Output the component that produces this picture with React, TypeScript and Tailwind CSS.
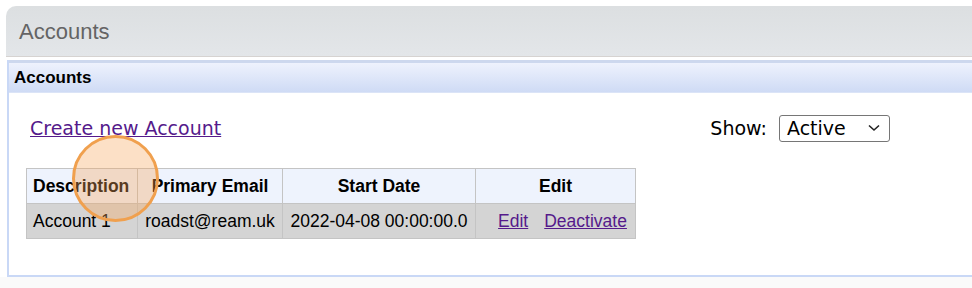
import React from "react";

const cols = [
  { label: "Description", w: "w-[111px]", align: "text-left" },
  { label: "Primary Email", w: "w-[145px]", align: "text-center" },
  { label: "Start Date", w: "w-[193px]", align: "text-center" },
  { label: "Edit", w: "w-[160px]", align: "text-center" },
];

const App = () => {
  return (
    <div className="w-[972px] h-[288px] bg-white relative overflow-hidden font-['Liberation_Sans',Arial,sans-serif]">
      {/* page header */}
      <div className="ml-[6px] mt-[6px] h-[51px] rounded-tl-[10px] bg-gradient-to-b from-[#dcdfe1] to-[#e3e6e9] border-b border-[#d6d3d1] flex items-center pl-[13px]">
        <span className="text-[22px] text-[#646464]">Accounts</span>
      </div>

      {/* panel */}
      <div className="ml-[7px] mt-[3px] h-[217px] border-l-2 border-b-2 border-[#c9d8f6] flex flex-col">
        <div className="h-[33px] border-t-[3px] border-[#cdd8ee] bg-gradient-to-b from-[#eef2fd] to-[#cfdbf5] border-b border-b-[#dbe4f7] flex items-center pl-[5px]">
          <span className="text-[17px] font-bold text-black">Accounts</span>
        </div>

        <div className="flex items-center justify-between pl-[21px] pr-[82px] mt-[20px]">
          <a
            href="#"
            className="text-[19px] text-[#551a8b] underline font-['DejaVu_Sans',Verdana,sans-serif] leading-[30px]"
          >
            Create new Account
          </a>
          <div className="flex items-center gap-[12px] font-['DejaVu_Sans',Verdana,sans-serif]">
            <span className="text-[19px] text-black">Show:</span>
            <div className="w-[111px] h-[27px] border border-[#767676] rounded-[3px] flex items-center justify-between pl-[7px] pr-[9px]">
              <span className="text-[19px] text-black">Active</span>
              <svg width="12" height="8" viewBox="0 0 12 8" fill="none" stroke="#222" strokeWidth="1.6">
                <path d="M1 1.5 L6 6 L11 1.5" />
              </svg>
            </div>
          </div>
        </div>

        <table className="ml-[17px] mt-[25px] table-fixed border-collapse border border-[#c4c4c4] text-[17.5px] text-black w-[610px]">
          <thead>
            <tr className="bg-[#eef3fd] h-[35px]">
              {cols.map((c) => (
                <th
                  key={c.label}
                  className={`border border-[#c4c4c4] font-bold px-[6px] ${c.w} ${c.align}`}
                >
                  {c.label}
                </th>
              ))}
            </tr>
          </thead>
          <tbody>
            <tr className="bg-[#d4d4d4] h-[35px]">
              <td className="border border-[#c4c4c4] px-[6px] whitespace-nowrap">Account 1</td>
              <td className="border border-[#c4c4c4] px-[5px] text-center whitespace-nowrap">roadst@ream.uk</td>
              <td className="border border-[#c4c4c4] px-[5px] text-center whitespace-nowrap">2022-04-08 00:00:00.0</td>
              <td className="border border-[#c4c4c4] pl-[19px] pr-[5px] text-center whitespace-nowrap">
                <a href="#" className="text-[#551a8b] underline mr-[16px]">Edit</a>
                <a href="#" className="text-[#551a8b] underline">Deactivate</a>
              </td>
            </tr>
          </tbody>
        </table>
      </div>
      <div className="h-[14px] bg-[#fafafa]" />

      {/* click indicator */}
      <div className="absolute left-[72px] top-[135px] w-[87px] h-[87px] rounded-full border-[3px] border-[#f0a04e] bg-[#f5a55c]/35" />
    </div>
  );
};

export default App;
